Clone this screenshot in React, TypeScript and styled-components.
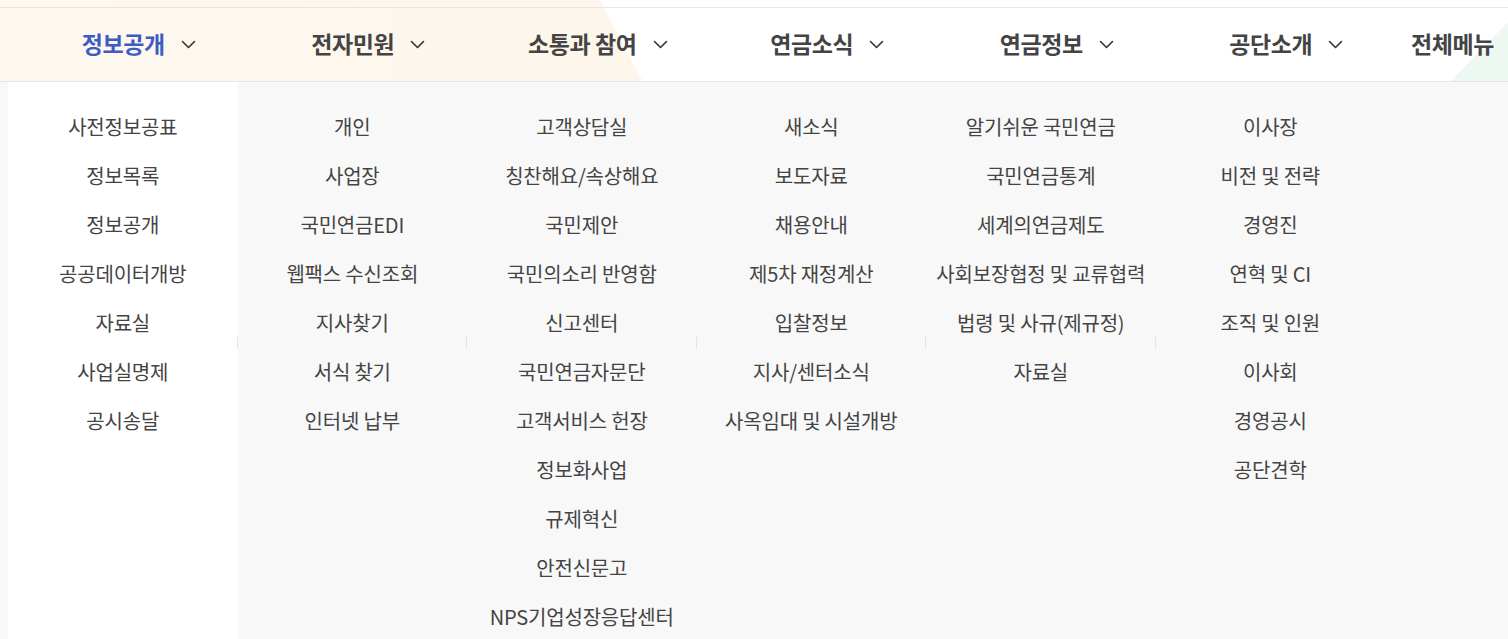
import React from "react";
import styled, { createGlobalStyle } from "styled-components";

const Global = createGlobalStyle`
  html, body { margin: 0; padding: 0; background: #fff; overflow: hidden; }
  body { font-family: "Noto Sans CJK KR", "Noto Sans", sans-serif; }
  * { box-sizing: border-box; }
  ul { list-style: none; margin: 0; padding: 0; }
`;

const Top = styled.header`
  position: relative;
  padding-top: 7px;
  &::before {
    content: "";
    position: absolute;
    inset: 0;
    background: linear-gradient(to right, #fdf8f0, #fdf3e5);
    clip-path: polygon(0 0, 600px 0, 643px 100%, 0 100%);
    z-index: 0;
  }
  &::after {
    content: "";
    position: absolute;
    inset: 0;
    background: #eef8f3;
    clip-path: polygon(100% 22px, 100% 100%, calc(100% - 58px) 100%);
    z-index: 0;
  }
`;

const Nav = styled.nav`
  position: relative;
  z-index: 1;
  height: 75px;
  border-top: 1px solid #e6e6e6;
  border-bottom: 1px solid #e6e6e6;
  display: flex;
  align-items: center;
  padding-left: 24px;
`;

const NavItem = styled.a<{ $active?: boolean }>`
  width: 229.5px;
  flex: none;
  display: flex;
  justify-content: center;
  align-items: center;
  gap: 16px;
  font-size: 23px;
  font-weight: 700;
  letter-spacing: -0.4px;
  color: ${(p) => (p.$active ? "#3d5bc2" : "#444")};
  cursor: pointer;
  padding-bottom: 3px;
`;

const AllMenu = styled.a`
  margin-left: 10px;
  font-size: 23px;
  font-weight: 700;
  letter-spacing: -0.4px;
  color: #444;
  padding-bottom: 3px;
  white-space: nowrap;
`;

const Chevron = styled.svg`
  width: 15px;
  height: 9px;
  flex: none;
  margin-top: 3px;
`;

const Panel = styled.div`
  background: #f8f8f8;
  padding-left: 8px;
  display: grid;
  grid-template-columns: repeat(6, 229.5px);
  min-height: calc(100vh - 82px);
`;

const Column = styled.ul<{ $white?: boolean; $sep?: boolean }>`
  position: relative;
  background: ${(p) => (p.$white ? "#fff" : "transparent")};
  padding: 20px 0 0;
  &::after {
    content: "";
    display: ${(p) => (p.$sep ? "block" : "none")};
    position: absolute;
    right: 0;
    top: 255px;
    width: 1px;
    height: 12px;
    background: #e4e4e4;
  }
`;

const Item = styled.li`
  height: 49px;
  line-height: 49px;
  text-align: center;
  font-size: 20px;
  font-weight: 400;
  color: #444;
  letter-spacing: -0.2px;
  white-space: nowrap;
`;

const ChevronIcon = () => (
  <Chevron viewBox="0 0 15 9" fill="none">
    <polyline points="1.5,1.5 7.5,7.5 13.5,1.5" stroke="#333" strokeWidth="1.6" strokeLinecap="round" strokeLinejoin="round" />
  </Chevron>
);

const menus = ["정보공개", "전자민원", "소통과 참여", "연금소식", "연금정보", "공단소개"];

const columns: string[][] = [
  ["사전정보공표", "정보목록", "정보공개", "공공데이터개방", "자료실", "사업실명제", "공시송달"],
  ["개인", "사업장", "국민연금EDI", "웹팩스 수신조회", "지사찾기", "서식 찾기", "인터넷 납부"],
  ["고객상담실", "칭찬해요/속상해요", "국민제안", "국민의소리 반영함", "신고센터", "국민연금자문단", "고객서비스 헌장", "정보화사업", "규제혁신", "안전신문고", "NPS기업성장응답센터"],
  ["새소식", "보도자료", "채용안내", "제5차 재정계산", "입찰정보", "지사/센터소식", "사옥임대 및 시설개방"],
  ["알기쉬운 국민연금", "국민연금통계", "세계의연금제도", "사회보장협정 및 교류협력", "법령 및 사규(제규정)", "자료실"],
  ["이사장", "비전 및 전략", "경영진", "연혁 및 CI", "조직 및 인원", "이사회", "경영공시", "공단견학"],
];

export default function App() {
  return (
    <>
      <Global />
      <Top>
        <Nav>
          {menus.map((m, i) => (
            <NavItem key={m} $active={i === 0}>
              <span>{m}</span>
              <ChevronIcon />
            </NavItem>
          ))}
          <AllMenu>전체메뉴</AllMenu>
        </Nav>
      </Top>
      <Panel>
        {columns.map((col, i) => (
          <Column key={i} $white={i === 0} $sep={i < 5}>
            {col.map((t) => (
              <Item key={t}>{t}</Item>
            ))}
          </Column>
        ))}
      </Panel>
    </>
  );
}
